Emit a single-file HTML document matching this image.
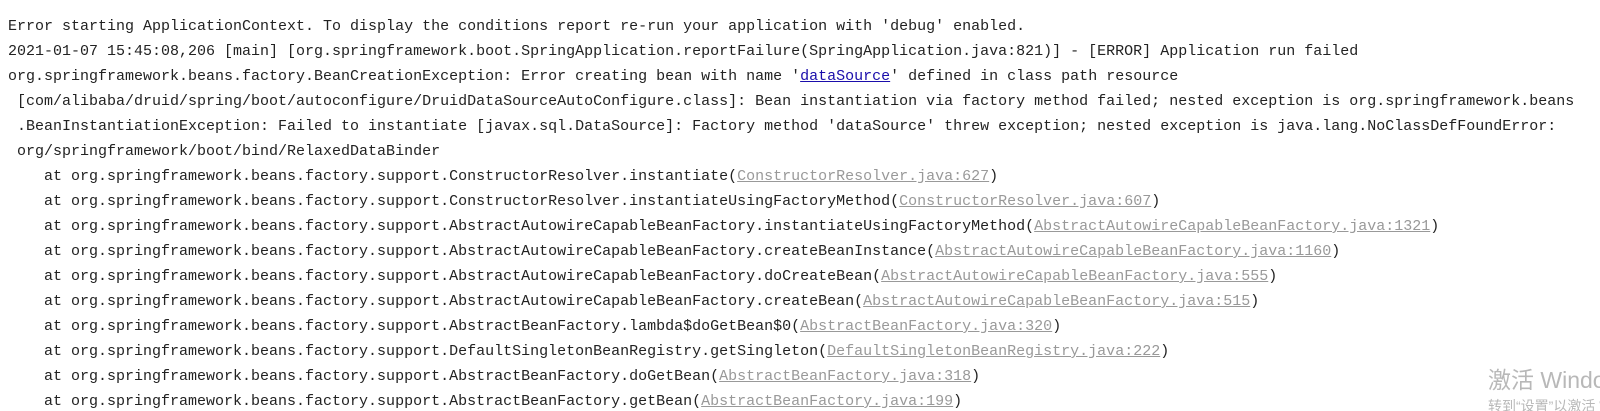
<!DOCTYPE html>
<html><head><meta charset="utf-8"><style>
html,body{margin:0;padding:0;background:#fff;width:1600px;height:411px;overflow:hidden;position:relative}
.c{position:absolute;left:8px;top:14px;font-family:"Liberation Mono",monospace;font-size:15px;line-height:25px;color:#222;white-space:pre}
a{color:#1a0dab;text-decoration:underline}
.g{color:#999;text-decoration:underline}
.w1{position:absolute;left:1488px;top:361px;font-family:"Liberation Sans","Noto Sans CJK SC",sans-serif;font-size:23px;color:#b8b8b8;white-space:nowrap}
.w2{position:absolute;left:1488px;top:396px;font-family:"Liberation Sans","Noto Sans CJK SC",sans-serif;font-size:14px;color:#b8b8b8;white-space:nowrap}
</style></head><body>
<div class="c">Error starting ApplicationContext. To display the conditions report re-run your application with 'debug' enabled.
2021-01-07 15:45:08,206 [main] [org.springframework.boot.SpringApplication.reportFailure(SpringApplication.java:821)] - [ERROR] Application run failed
org.springframework.beans.factory.BeanCreationException: Error creating bean with name '<a>dataSource</a>' defined in class path resource
 [com/alibaba/druid/spring/boot/autoconfigure/DruidDataSourceAutoConfigure.class]: Bean instantiation via factory method failed; nested exception is org.springframework.beans
 .BeanInstantiationException: Failed to instantiate [javax.sql.DataSource]: Factory method 'dataSource' threw exception; nested exception is java.lang.NoClassDefFoundError:
 org/springframework/boot/bind/RelaxedDataBinder
    at org.springframework.beans.factory.support.ConstructorResolver.instantiate(<span class="g">ConstructorResolver.java:627</span>)
    at org.springframework.beans.factory.support.ConstructorResolver.instantiateUsingFactoryMethod(<span class="g">ConstructorResolver.java:607</span>)
    at org.springframework.beans.factory.support.AbstractAutowireCapableBeanFactory.instantiateUsingFactoryMethod(<span class="g">AbstractAutowireCapableBeanFactory.java:1321</span>)
    at org.springframework.beans.factory.support.AbstractAutowireCapableBeanFactory.createBeanInstance(<span class="g">AbstractAutowireCapableBeanFactory.java:1160</span>)
    at org.springframework.beans.factory.support.AbstractAutowireCapableBeanFactory.doCreateBean(<span class="g">AbstractAutowireCapableBeanFactory.java:555</span>)
    at org.springframework.beans.factory.support.AbstractAutowireCapableBeanFactory.createBean(<span class="g">AbstractAutowireCapableBeanFactory.java:515</span>)
    at org.springframework.beans.factory.support.AbstractBeanFactory.lambda$doGetBean$0(<span class="g">AbstractBeanFactory.java:320</span>)
    at org.springframework.beans.factory.support.DefaultSingletonBeanRegistry.getSingleton(<span class="g">DefaultSingletonBeanRegistry.java:222</span>)
    at org.springframework.beans.factory.support.AbstractBeanFactory.doGetBean(<span class="g">AbstractBeanFactory.java:318</span>)
    at org.springframework.beans.factory.support.AbstractBeanFactory.getBean(<span class="g">AbstractBeanFactory.java:199</span>)</div>
<div class="w1">激活 Windows</div>
<div class="w2">转到“设置”以激活 Windows。</div>
</body></html>
